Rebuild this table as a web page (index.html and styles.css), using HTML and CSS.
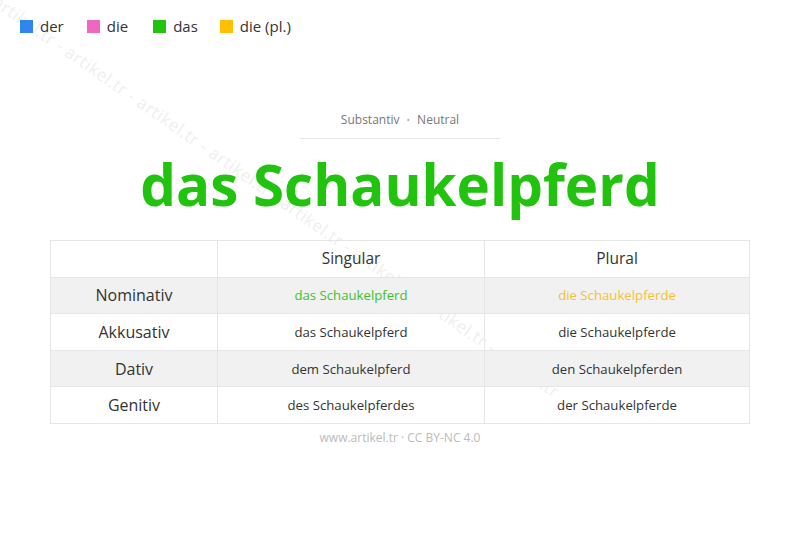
FILE: index.html
```html
<!DOCTYPE html>
<html lang="de">
<head>
<meta charset="utf-8">
<title>das Schaukelpferd</title>
<link rel="stylesheet" href="styles.css">
</head>
<body>
<div class="page">
  <div class="watermark">artikel.tr - artikel.tr - artikel.tr - artikel.tr - artikel.tr - artikel.tr - artikel.tr - artikel.tr</div>
  <ul class="legend">
    <li class="legend-item"><span class="swatch swatch-der"></span>der</li>
    <li class="legend-item"><span class="swatch swatch-die"></span>die</li>
    <li class="legend-item"><span class="swatch swatch-das"></span>das</li>
    <li class="legend-item"><span class="swatch swatch-pl"></span>die (pl.)</li>
  </ul>
  <div class="header">
    <div class="meta">Substantiv <span class="dot">•</span> Neutral</div>
    <h1 class="title">das Schaukelpferd</h1>
  </div>
  <table class="cases">
    <thead>
      <tr><th class="case"></th><th>Singular</th><th>Plural</th></tr>
    </thead>
    <tbody>
      <tr class="alt"><td class="case">Nominativ</td><td class="sg-nom">das Schaukelpferd</td><td class="pl-nom">die Schaukelpferde</td></tr>
      <tr><td class="case">Akkusativ</td><td>das Schaukelpferd</td><td>die Schaukelpferde</td></tr>
      <tr class="alt"><td class="case">Dativ</td><td>dem Schaukelpferd</td><td>den Schaukelpferden</td></tr>
      <tr><td class="case">Genitiv</td><td>des Schaukelpferdes</td><td>der Schaukelpferde</td></tr>
    </tbody>
  </table>
  <div class="footer">www.artikel.tr · CC BY-NC 4.0</div>
</div>
</body>
</html>
```
FILE: styles.css
```css
html, body {
  margin: 0;
  padding: 0;
  background: #fff;
}
body {
  font-family: "Open Sans", "Noto Sans", sans-serif;
  color: #333;
}
.page {
  position: relative;
  width: 800px;
  height: 533px;
  overflow: hidden;
}
.watermark {
  position: absolute;
  left: 2px;
  top: -10px;
  width: 1100px;
  transform-origin: 0 0;
  transform: rotate(35deg);
  font-size: 17px;
  color: #efefef;
  white-space: nowrap;
  letter-spacing: 0.5px;
  pointer-events: none;
}
.legend {
  position: relative;
  display: flex;
  list-style: none;
  margin: 0;
  padding: 16px 0 0 20px;
}
.legend-item {
  display: flex;
  align-items: center;
  font-size: 15px;
  color: #333;
  line-height: 20px;
  margin-right: 23px;
}
.legend-item:nth-child(2) { margin-right: 25px; }
.legend-item:nth-child(3) { margin-right: 22px; }
.swatch {
  width: 13px;
  height: 13px;
  margin-right: 7px;
  display: inline-block;
}
.swatch-der { background: #2f86eb; }
.swatch-die { background: #ee67c1; }
.swatch-das { background: #22c30e; }
.swatch-pl { background: #ffc000; }
.header {
  position: relative;
  display: flex;
  flex-direction: column;
  align-items: center;
  margin-top: 75px;
}
.meta {
  font-size: 12px;
  color: #777;
  width: 200px;
  text-align: center;
  padding-bottom: 9px;
  border-bottom: 1px solid #e6e6e6;
  line-height: 18px;
}
.dot {
  color: #aaa;
  font-size: 9px;
  margin: 0 4px;
  vertical-align: 1px;
}
.title {
  margin: 6px 0 0;
  font-size: 56.5px;
  font-weight: 700;
  color: #22c30e;
  line-height: 80px;
  letter-spacing: 0;
}
.cases {
  position: relative;
  margin: 15px 50px 0;
  width: 700px;
  border-collapse: collapse;
  table-layout: fixed;
}
.cases th, .cases td {
  border: 1px solid #e6e6e6;
  text-align: center;
  height: 35.6px;
  padding: 0;
  font-weight: 400;
}
.cases th {
  font-size: 15.5px;
  color: #333;
  height: 33.6px;
  padding-bottom: 2px;
}
.cases td {
  font-size: 13.2px;
  color: #333;
}
.cases .case {
  width: 166px;
  font-size: 16px;
}
.cases th:nth-child(2) { width: 266px; }
.cases tr.alt td {
  background: #f1f1f1;
}
.cases .sg-nom { color: #3cc22a; }
.cases .pl-nom { color: #f7c12c; }
.footer {
  position: relative;
  text-align: center;
  font-size: 12px;
  color: #bbb;
  margin-top: 5px;
}
```
